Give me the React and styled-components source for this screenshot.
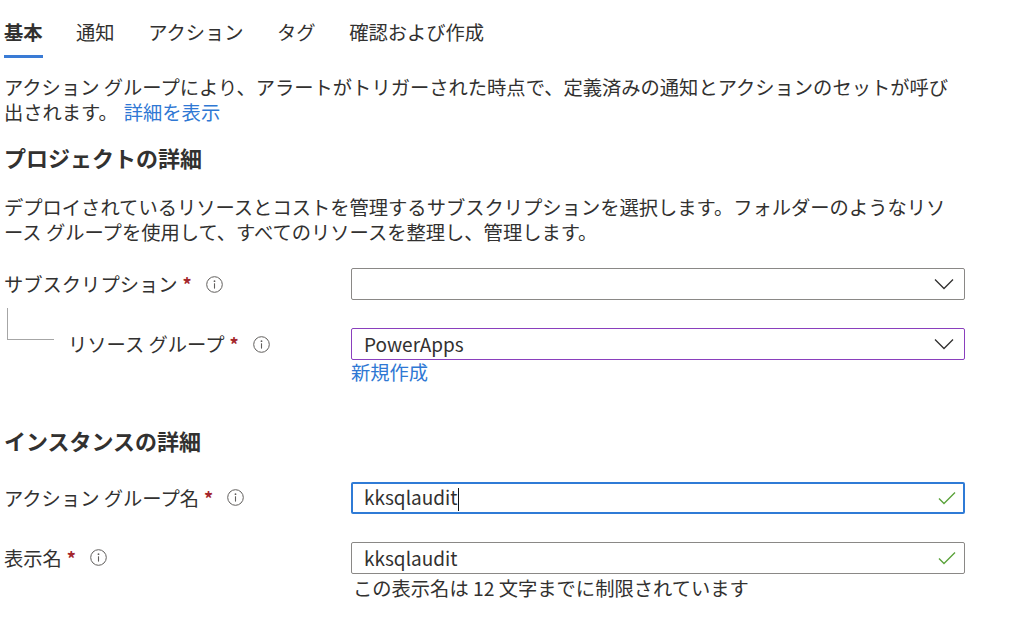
import React from 'react'
import styled, { createGlobalStyle } from 'styled-components'

const GlobalStyle = createGlobalStyle`
  body {
    margin: 0;
    background: #ffffff;
    font-family: "Noto Sans CJK JP", "Noto Sans", sans-serif;
    color: #323130;
  }
`

const Page = styled.div`
  padding: 0 4px;
  width: 962px;
  font-size: 19.3px;
`

const Tabs = styled.div`
  display: flex;
  gap: 33.5px;
`

const Tab = styled.div`
  padding: 19px 0 10px;
  line-height: 26px;
  font-weight: ${p => (p.$active ? 700 : 400)};
  border-bottom: 3px solid ${p => (p.$active ? '#3a7bd5' : 'transparent')};
  color: #323130;
`

const Para = styled.p`
  margin: ${p => p.$top}px 0 0;
  line-height: 25px;
  width: 958px;
`

const Link = styled.a`
  display: inline-block;
  color: #2f78d4;
  text-decoration: none;
  margin-left: ${p => p.$indent || 0}px;
`

const Heading = styled.h2`
  margin: ${p => p.$top}px 0 0;
  font-size: 22px;
  line-height: 30px;
  font-weight: 700;
`

const Form = styled.div`
  display: grid;
  grid-template-columns: 347px 614px;
  row-gap: ${p => p.$gap}px;
  margin-top: ${p => p.$top}px;
`

const LabelCell = styled.div`
  display: flex;
  align-items: center;
  height: 32px;
`

const Connector = styled.div`
  align-self: flex-start;
  width: 46px;
  height: 31px;
  margin: -20px 14px 0 3px;
  border-left: 1px solid #a6a6a6;
  border-bottom: 1px solid #a6a6a6;
`

const Required = styled.span`
  color: #a4262c;
  font-weight: 700;
  font-size: 18px;
  margin-left: 5px;
`

const InfoWrap = styled.span`
  display: inline-flex;
  margin-left: 14px;
`

const FieldCell = styled.div`
  display: flex;
  flex-direction: column;
`

const Box = styled.div`
  box-sizing: border-box;
  height: 32px;
  display: flex;
  align-items: center;
  justify-content: space-between;
  padding: 0 ${p => (p.$focus ? 7 : 8)}px 0 ${p => (p.$focus ? 11 : 12)}px;
  border: ${p => (p.$focus ? 2 : 1)}px solid ${p => p.$border || '#8a8886'};
  border-radius: 2px;
  background: #fff;
  color: #323130;
`

const Value = styled.span`
  line-height: 26px;
  font-size: 19px;
`

const Caret = styled.span`
  display: inline-block;
  width: 1px;
  height: 23px;
  background: #111;
  vertical-align: middle;
  margin-left: 1px;
`

const Below = styled.div`
  margin-top: ${p => (p.$link ? 0 : 2)}px;
  line-height: 25px;
  padding-left: ${p => (p.$link ? 0 : 2)}px;
`

const Chevron = () => (
  <svg width="20" height="12" viewBox="0 0 20 12" style={{ marginRight: 2 }}>
    <polyline points="1,1.5 10,10.5 19,1.5" fill="none" stroke="#323130" strokeWidth="1.3" />
  </svg>
)

const Check = () => (
  <svg width="18" height="14" viewBox="0 0 18 14">
    <polyline points="1,7.5 6,12.5 17,1.5" fill="none" stroke="#5ca33c" strokeWidth="1.4" />
  </svg>
)

const Info = () => (
  <InfoWrap>
    <svg width="17" height="17" viewBox="0 0 17 17">
      <circle cx="8.5" cy="8.5" r="7.8" fill="none" stroke="#605e5c" strokeWidth="1" />
      <circle cx="8.5" cy="5.2" r="0.9" fill="#605e5c" />
      <line x1="8.5" y1="7.3" x2="8.5" y2="12.6" stroke="#605e5c" strokeWidth="1.1" />
    </svg>
  </InfoWrap>
)

const Label = ({ text, tree }) => (
  <LabelCell>
    {tree && <Connector />}
    <span>{text}</span>
    <Required>*</Required>
    <Info />
  </LabelCell>
)

const App = () => (
  <Page>
    <GlobalStyle />
    <Tabs>
      <Tab $active>基本</Tab>
      <Tab>通知</Tab>
      <Tab>アクション</Tab>
      <Tab>タグ</Tab>
      <Tab>確認および作成</Tab>
    </Tabs>

    <Para $top={16.5}>
      <span>アクション グループにより、アラートがトリガーされた時点で、定義済みの通知とアクションのセットが呼び</span>
      <span>出されます。</span>
      <Link $indent={6} href="#">詳細を表示</Link>
    </Para>

    <Heading $top={17.5}>プロジェクトの詳細</Heading>
    <Para $top={22.5}>
      デプロイされているリソースとコストを管理するサブスクリプションを選択します。フォルダーのようなリソース グループを使用して、すべてのリソースを整理し、管理します。
    </Para>

    <Form $top={23.5} $gap={28}>
      <Label text="サブスクリプション" />
      <FieldCell>
        <Box>
          <Value />
          <Chevron />
        </Box>
      </FieldCell>
      <Label text="リソース グループ" tree />
      <FieldCell>
        <Box $border="#8a3fbd">
          <Value>PowerApps</Value>
          <Chevron />
        </Box>
        <Below $link>
          <Link href="#">新規作成</Link>
        </Below>
      </FieldCell>
    </Form>

    <Heading $top={39.5}>インスタンスの詳細</Heading>

    <Form $top={27} $gap={28}>
      <Label text="アクション グループ名" />
      <FieldCell>
        <Box $focus $border="#2f7bd6">
          <Value>kksqlaudit<Caret /></Value>
          <Check />
        </Box>
      </FieldCell>
      <Label text="表示名" />
      <FieldCell>
        <Box>
          <Value>kksqlaudit</Value>
          <Check />
        </Box>
        <Below>この表示名は 12 文字までに制限されています</Below>
      </FieldCell>
    </Form>
  </Page>
)

export default App
